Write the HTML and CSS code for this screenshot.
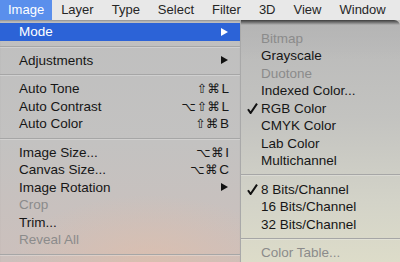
FILE: index.html
```html
<!DOCTYPE html>
<html>
<head>
<meta charset="utf-8">
<link rel="stylesheet" href="styles.css">
</head>
<body>
<div class="screen">
  <nav class="menubar">
    <span class="mb-item active">Image</span>
    <span class="mb-item">Layer</span>
    <span class="mb-item">Type</span>
    <span class="mb-item">Select</span>
    <span class="mb-item">Filter</span>
    <span class="mb-item">3D</span>
    <span class="mb-item">View</span>
    <span class="mb-item">Window</span>
  </nav>
  <div class="menus">
    <div class="menu main">
      <div class="row hl"><span>Mode</span><svg class="arrow" viewBox="0 0 7 8"><path d="M0 0 L7 4 L0 8 Z"/></svg></div>
      <div class="sep"></div>
      <div class="row"><span>Adjustments</span><svg class="arrow" viewBox="0 0 7 8"><path d="M0 0 L7 4 L0 8 Z"/></svg></div>
      <div class="sep"></div>
      <div class="row"><span>Auto Tone</span><span class="sc"><span class="sym">⇧⌘</span>L</span></div>
      <div class="row"><span>Auto Contrast</span><span class="sc"><span class="sym">⌥⇧⌘</span>L</span></div>
      <div class="row"><span>Auto Color</span><span class="sc"><span class="sym">⇧⌘</span>B</span></div>
      <div class="sep"></div>
      <div class="row"><span>Image Size...</span><span class="sc"><span class="sym">⌥⌘</span>I</span></div>
      <div class="row"><span>Canvas Size...</span><span class="sc"><span class="sym">⌥⌘</span>C</span></div>
      <div class="row"><span>Image Rotation</span><svg class="arrow" viewBox="0 0 7 8"><path d="M0 0 L7 4 L0 8 Z"/></svg></div>
      <div class="row dis"><span>Crop</span></div>
      <div class="row"><span>Trim...</span></div>
      <div class="row dis"><span>Reveal All</span></div>
      <div class="sep"></div>
    </div>
    <div class="menu sub">
      <div class="row dis">Bitmap</div>
      <div class="row">Grayscale</div>
      <div class="row dis">Duotone</div>
      <div class="row">Indexed Color...</div>
      <div class="row"><svg class="check" viewBox="0 0 11 11"><path d="M1 6.2 L3.6 10 L10 0.6"/></svg>RGB Color</div>
      <div class="row">CMYK Color</div>
      <div class="row">Lab Color</div>
      <div class="row">Multichannel</div>
      <div class="sep"></div>
      <div class="row"><svg class="check" viewBox="0 0 11 11"><path d="M1 6.2 L3.6 10 L10 0.6"/></svg>8 Bits/Channel</div>
      <div class="row">16 Bits/Channel</div>
      <div class="row">32 Bits/Channel</div>
      <div class="sep"></div>
      <div class="row dis">Color Table...</div>
    </div>
  </div>
</div>
</body>
</html>
```

FILE: styles.css
```css
html, body {
  margin: 0;
  padding: 0;
}
body {
  width: 400px;
  height: 262px;
  overflow: hidden;
  font-family: "Liberation Sans", Arial, sans-serif;
  color: #161616;
}
.screen {
  width: 400px;
  height: 262px;
  display: flex;
  flex-direction: column;
  background: #c4c2c0;
}
.menubar {
  height: 20px;
  flex: none;
  display: flex;
  background: #e8e8e8;
  font-size: 13px;
  line-height: 20px;
  color: #262626;
}
.mb-item {
  padding: 0 9px;
}
.mb-item:first-child {
  padding-left: 8px;
  padding-right: 8px;
}
.mb-item.active {
  background: #5a8fec;
  color: #fff;
}
.menus {
  flex: 1;
  display: flex;
  min-height: 0;
}
.menu {
  font-size: 13.5px;
  display: flex;
  flex-direction: column;
}
.main {
  width: 240px;
  flex: none;
  padding-top: 3px;
  background:
    radial-gradient(ellipse 140px 70px at 150px 245px, rgba(222, 190, 172, 0.8), rgba(222, 190, 172, 0) 100%),
    linear-gradient(#bfbfbf 0%, #c3c2c1 50%, #ccc0bc 100%);
  box-shadow: inset 0 2px 2px -1px rgba(0, 0, 0, 0.25);
}
.sub {
  flex: 1;
  padding-top: 9.25px;
  border-left: 1px solid #a9a9a9;
  border-top-right-radius: 6px;
  background:
    linear-gradient(#3d3d3d 0, #6a6a6a 2px, #b5b5b5 5px, rgba(185, 185, 185, 0) 40px),
    linear-gradient(#b9b9b9 0%, #c3c3c0 40%, #d3d3c8 75%, #dddcc9 100%);
}
.row {
  height: 17.5px;
  flex: none;
  display: flex;
  align-items: center;
  justify-content: space-between;
  padding: 0 11px 0 19px;
  white-space: nowrap;
}
.sub .row {
  justify-content: flex-start;
  padding-left: 20px;
  position: relative;
}
.row.hl {
  background: #2c63d7;
  color: #fff;
}
.row.dis {
  color: #8b8b8b;
}
.sep {
  height: 11px;
  flex: none;
  display: flex;
  align-items: center;
}
.sep::after {
  content: "";
  display: block;
  width: 100%;
  height: 1px;
  background: #a6a6a6;
  box-shadow: 0 1px 0 rgba(255, 255, 255, 0.25);
}
.arrow {
  width: 7px;
  height: 8px;
  margin-right: 1px;
  fill: #111;
}
.row.hl .arrow {
  fill: #fff;
}
.sc {
  font-size: 13.5px;
  display: flex;
  align-items: center;
}
.sym {
  font-family: "DejaVu Sans", sans-serif;
  font-size: 12.5px;
  letter-spacing: 0.5px;
  margin-right: 1px;
}
.check {
  position: absolute;
  left: 6px;
  top: 3.5px;
  width: 11px;
  height: 11px;
  fill: none;
  stroke: #111;
  stroke-width: 2;
}
```
